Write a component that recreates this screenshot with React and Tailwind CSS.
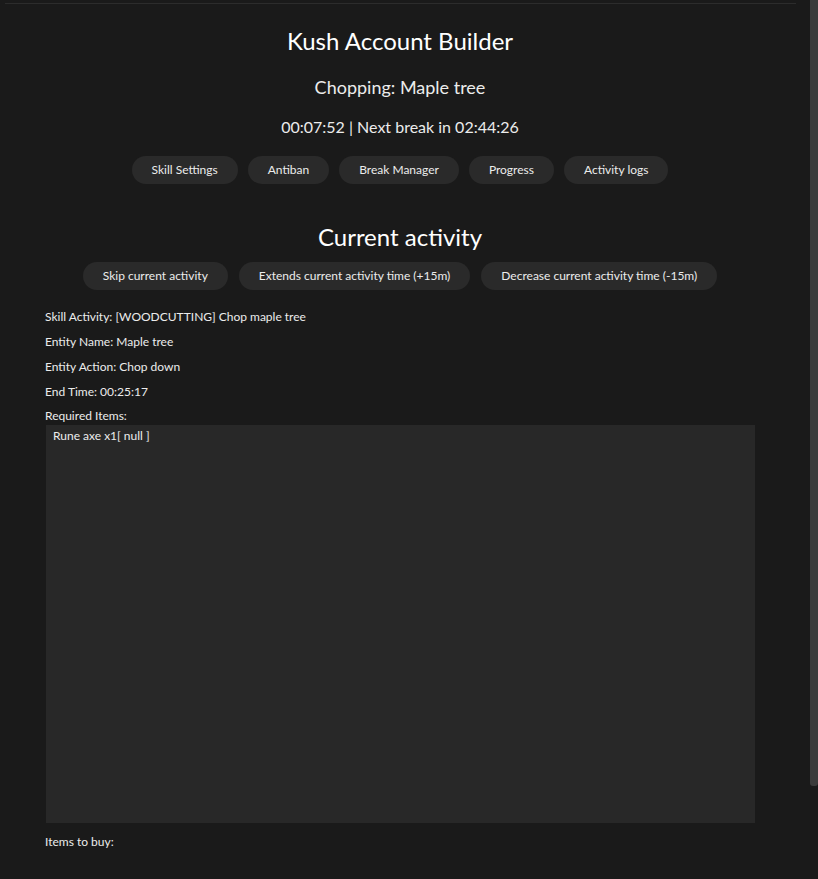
const topButtons = ['Skill Settings', 'Antiban', 'Break Manager', 'Progress', 'Activity logs'];
const activityButtons = [
  'Skip current activity',
  'Extends current activity time (+15m)',
  'Decrease current activity time (-15m)',
];

function PillButton({ label }) {
  return (
    <button className="h-[28px] px-[20px] rounded-full bg-[#2a2a2a] text-[12px] text-[#ececec] leading-none">
      {label}
    </button>
  );
}

export default function App() {
  return (
    <div className="min-h-screen bg-[#1a1a1a] flex font-['Lato',sans-serif] text-[#ececec]">
      <div className="flex-1">
        <div className="pt-[3px]">
          <div className="ml-[5px] w-[791px] h-px bg-[#2c2c2c]" />
        </div>

        <div className="ml-[45px] w-[710px]">
          {/* Header */}
          <h1 className="mt-[21px] text-center text-[24px] leading-8 text-white">Kush Account Builder</h1>
          <p className="mt-[18px] text-center text-[18px] leading-6">Chopping: Maple tree</p>
          <p className="mt-4 text-center text-[16px] leading-6">00:07:52 | Next break in 02:44:26</p>
          <div className="mt-[17px] flex justify-center gap-[10px]">
            {topButtons.map((b) => (
              <PillButton key={b} label={b} />
            ))}
          </div>

          {/* Current activity */}
          <h2 className="mt-[37px] text-center text-[24px] leading-8 text-white">Current activity</h2>
          <div className="mt-[9px] flex justify-center gap-[11px]">
            {activityButtons.map((b) => (
              <PillButton key={b} label={b} />
            ))}
          </div>

          <div className="mt-[14px] text-[12px]">
            <div className="leading-[25px]">Skill Activity: [WOODCUTTING] Chop maple tree</div>
            <div className="leading-[25px]">Entity Name: Maple tree</div>
            <div className="leading-[25px]">Entity Action: Chop down</div>
            <div className="leading-[25px]">End Time: 00:25:17</div>
            <div className="pt-[3px] leading-[18px]">Required Items:</div>
            <div className="ml-px w-[709px] h-[398px] bg-[#282828] pl-[7px] pt-[3px] leading-4">
              Rune axe x1[ null ]
            </div>
            <div className="mt-[9px] leading-5">Items to buy:</div>
          </div>
        </div>
      </div>

      {/* scrollbar */}
      <div className="w-2">
        <div className="h-[786px] bg-[#3b3b3b] rounded-b-[3px]" />
      </div>
    </div>
  );
}
